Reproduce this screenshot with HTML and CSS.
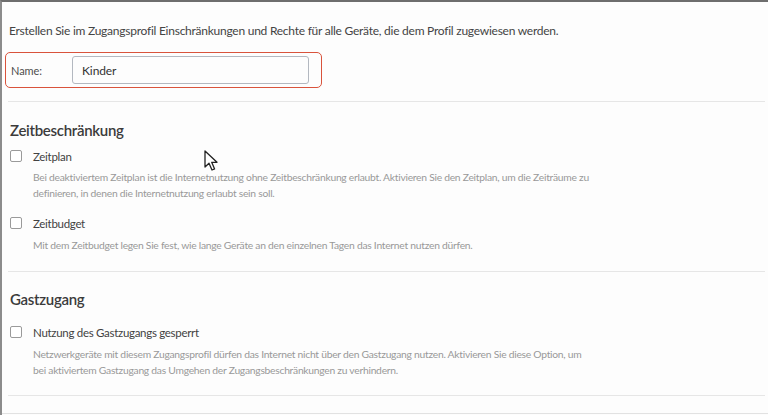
FILE: index.html
```html
<!DOCTYPE html>
<html lang="de">
<head>
<meta charset="utf-8">
<title>Zugangsprofil</title>
<link rel="stylesheet" href="styles.css">
</head>
<body>
<div class="frame">
  <p class="intro">Erstellen Sie im Zugangsprofil Einschränkungen und Rechte für alle Geräte, die dem Profil zugewiesen werden.</p>
  <div class="name-box">
    <span class="name-label">Name:</span>
    <div class="name-input">Kinder</div>
  </div>
  <div class="sep"></div>

  <section class="section first">
    <h2 class="heading">Zeitbeschränkung</h2>
    <div class="option">
      <span class="cb"></span>
      <span class="label">Zeitplan</span>
    </div>
    <p class="desc">Bei deaktiviertem Zeitplan ist die Internetnutzung ohne Zeitbeschränkung erlaubt. Aktivieren Sie den Zeitplan, um die Zeiträume zu<br>definieren, in denen die Internetnutzung erlaubt sein soll.</p>
    <div class="option second">
      <span class="cb"></span>
      <span class="label">Zeitbudget</span>
    </div>
    <p class="desc d2">Mit dem Zeitbudget legen Sie fest, wie lange Geräte an den einzelnen Tagen das Internet nutzen dürfen.</p>
  </section>
  <div class="sep s2"></div>

  <section class="section guest">
    <h2 class="heading">Gastzugang</h2>
    <div class="option">
      <span class="cb"></span>
      <span class="label">Nutzung des Gastzugangs gesperrt</span>
    </div>
    <p class="desc d2">Netzwerkgeräte mit diesem Zugangsprofil dürfen das Internet nicht über den Gastzugang nutzen. Aktivieren Sie diese Option, um<br>bei aktiviertem Gastzugang das Umgehen der Zugangsbeschränkungen zu verhindern.</p>
  </section>
  <div class="sep s3"></div>
  <div class="sep bottom"></div>

  <svg class="cursor" width="16" height="23" viewBox="0 0 16 23" aria-hidden="true">
    <path d="M1 1 L1 17 L5 13.2 L8 20 L10.6 18.9 L7.7 12.3 L13 12.3 Z" fill="#fff" stroke="#222" stroke-width="1.3" stroke-linejoin="round"/>
  </svg>
</div>
</body>
</html>
```

FILE: styles.css
```css
html, body {
  margin: 0;
  padding: 0;
  background: #ffffff;
}

body {
  font-family: Lato, "Open Sans", "Liberation Sans", sans-serif;
  color: #444;
}

.frame {
  position: relative;
  width: 768px;
  height: 415px;
  box-sizing: border-box;
  border-top: 2px solid #6e6e6e;
  border-left: 2px solid #8c8c8c;
  background: #fdfdfd;
  overflow: hidden;
}

.intro {
  margin: 0;
  padding: 20px 0 0 7px;
  font-size: 12px;
  letter-spacing: -0.25px;
  line-height: 18px;
  color: #444;
}

.name-box {
  display: flex;
  align-items: center;
  margin: 12px 0 0 3px;
  width: 317px;
  height: 36px;
  box-sizing: border-box;
  border: 1.5px solid #d9533c;
  border-radius: 5px;
  padding-left: 5px;
}

.name-label {
  width: 61px;
  font-size: 11px;
  letter-spacing: -0.1px;
  color: #4d4d4d;
}

.name-input {
  width: 237px;
  height: 28px;
  box-sizing: border-box;
  border: 1px solid #b3b8c0;
  border-radius: 3px;
  padding-left: 9px;
  display: flex;
  align-items: center;
  font-size: 12px;
  letter-spacing: -0.1px;
  color: #333;
}

.sep {
  height: 1px;
  background: #e6e6e6;
  margin: 13px 3px 0 6px;
}

.sep.s2 {
  margin-top: 18px;
}

.sep.s3 {
  margin-top: 17px;
}

.sep.bottom {
  margin: 17px 0 0 0;
  background: #e2e2e2;
}

.section {
  padding: 18px 0 0 8px;
}

.section.guest {
  padding-top: 17px;
}

.heading {
  margin: 0;
  font-size: 15px;
  letter-spacing: -0.3px;
  line-height: 20px;
  font-weight: 600;
  color: #3b3b3b;
}

.option {
  display: flex;
  align-items: center;
  margin-top: 6px;
  height: 20px;
}

.option.second {
  margin-top: 12px;
}

.guest .option {
  margin-top: 13px;
}

.cb {
  width: 12px;
  height: 12px;
  box-sizing: border-box;
  border: 1px solid #9a9a9a;
  border-radius: 2px;
  background: #fff;
  margin-right: 11px;
}

.label {
  font-size: 11.5px;
  letter-spacing: -0.3px;
  color: #424242;
}

.desc {
  margin: 3px 0 0 23px;
  font-size: 10.3px;
  letter-spacing: -0.26px;
  line-height: 16px;
  color: #999;
}

.desc.d2 {
  margin-top: 4px;
}

.cursor {
  position: absolute;
  left: 202px;
  top: 148px;
}
```
